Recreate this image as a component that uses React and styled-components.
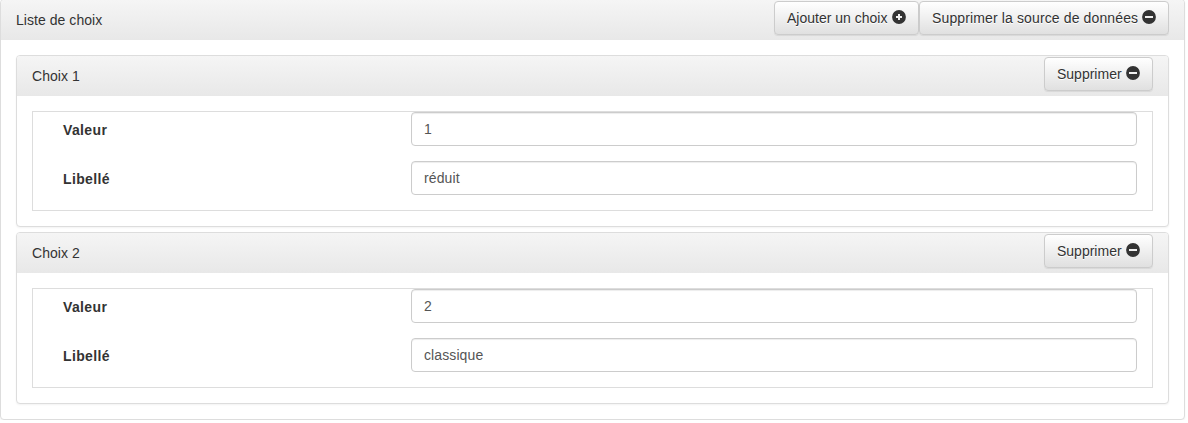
import React from "react";
import styled, { createGlobalStyle } from "styled-components";

const GlobalStyle = createGlobalStyle`
  *, *::before, *::after { box-sizing: border-box; }
  body {
    margin: 0;
    background: #fff;
    color: #333;
    font: 14px/20px "Liberation Sans", Arial, sans-serif;
    overflow: hidden;
  }
`;

const Panel = styled.section`
  background: #fff;
  border: 1px solid #ddd;
  border-radius: 4px;
  box-shadow: 0 1px 2px rgba(0, 0, 0, 0.05);
  & + & { margin-top: 5px; }
`;

const RootPanel = styled(Panel)`
  width: 1185px;
  margin-top: -1px;
`;

const Heading = styled.header`
  display: flex;
  justify-content: space-between;
  align-items: flex-start;
  height: 40px;
  padding: 1px 15px 0;
  border-radius: 3px 3px 0 0;
  background: linear-gradient(to bottom, #f5f5f5 0%, #e8e8e8 100%);
`;

const Title = styled.span`
  padding-top: 9px;
  letter-spacing: 0.05px;
`;

const Body = styled.div`
  padding: 15px;
`;

const Actions = styled.div`
  display: flex;
`;

const Button = styled.button`
  display: flex;
  align-items: flex-start;
  justify-content: space-between;
  width: ${({ $width }) => $width}px;
  height: 34px;
  padding: 6px 12px;
  border: 1px solid #ccc;
  border-radius: 4px;
  background: linear-gradient(to bottom, #fff 0%, #e0e0e0 100%);
  box-shadow: inset 0 1px 0 rgba(255, 255, 255, 0.15), 0 1px 1px rgba(0, 0, 0, 0.075);
  color: #333;
  font: inherit;
  letter-spacing: ${({ $tracking = 0 }) => $tracking}px;
  text-shadow: 0 1px 0 #fff;
  white-space: nowrap;
`;

const Glyph = styled.svg`
  flex: none;
  width: 14px;
  height: 14px;
  margin-top: 2px;
  fill: #333;
`;

const Fields = styled.fieldset`
  margin: 0;
  padding: 0 15px;
  border: 1px solid #ddd;
`;

const Row = styled.div`
  display: grid;
  grid-template-columns: 363px 1fr;
  margin-bottom: 15px;
`;

const Label = styled.label`
  padding: 8px 15px 0;
  font-weight: 700;
  letter-spacing: 0.36px;
`;

const Input = styled.input`
  width: 100%;
  height: 34px;
  padding: 6px 12px;
  border: 1px solid #ccc;
  border-radius: 4px;
  background: #fff;
  box-shadow: inset 0 1px 1px rgba(0, 0, 0, 0.075);
  color: #555;
  font: inherit;
  letter-spacing: 0.1px;
`;

function SignIcon({ plus }) {
  return (
    <Glyph viewBox="0 0 14 14" aria-hidden="true">
      <path
        fillRule="evenodd"
        d={
          plus
            ? "M7 .1a6.9 6.9 0 1 0 0 13.8A6.9 6.9 0 0 0 7 .1ZM6 4h2v2h2v2H8v2H6V8H4V6h2Z"
            : "M7 .1a6.9 6.9 0 1 0 0 13.8A6.9 6.9 0 0 0 7 .1ZM3 6h8v2H3Z"
        }
      />
    </Glyph>
  );
}

function Choice({ index, value, label }) {
  return (
    <Panel>
      <Heading>
        <Title>Choix {index}</Title>
        <Button type="button" $width={109}>Supprimer <SignIcon /></Button>
      </Heading>
      <Body>
        <Fields>
          <Row>
            <Label htmlFor={`value-${index}`}>Valeur</Label>
            <Input id={`value-${index}`} defaultValue={value} />
          </Row>
          <Row>
            <Label htmlFor={`label-${index}`}>Libellé</Label>
            <Input id={`label-${index}`} defaultValue={label} />
          </Row>
        </Fields>
      </Body>
    </Panel>
  );
}

export default function App() {
  return (
    <>
      <GlobalStyle />
      <RootPanel>
        <Heading>
          <Title>Liste de choix</Title>
          <Actions>
            <Button type="button" $width={145}>Ajouter un choix <SignIcon plus /></Button>
            <Button type="button" $width={250} $tracking={0.13}>
              Supprimer la source de données <SignIcon />
            </Button>
          </Actions>
        </Heading>
        <Body>
          <Choice index={1} value="1" label="réduit" />
          <Choice index={2} value="2" label="classique" />
        </Body>
      </RootPanel>
    </>
  );
}
